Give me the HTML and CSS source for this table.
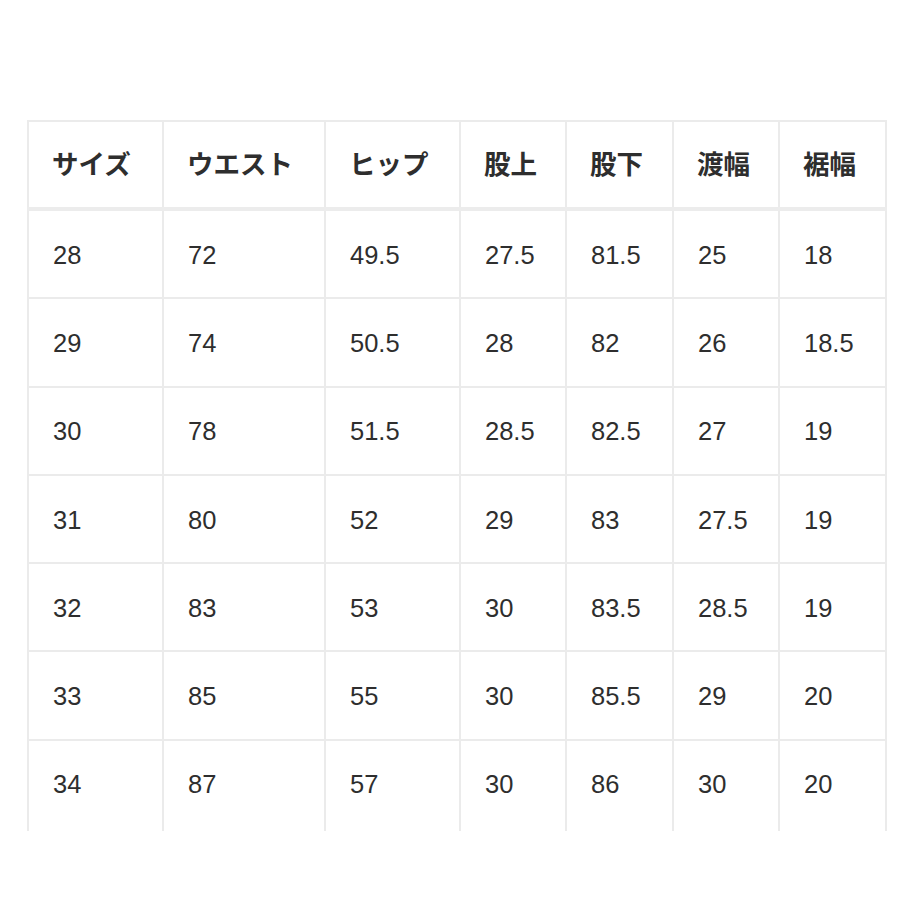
FILE: index.html
```html
<!DOCTYPE html>
<html lang="ja">
<head>
<meta charset="utf-8">
<title>サイズ表</title>
<link rel="stylesheet" href="styles.css">
</head>
<body>
<div class="page">
  <div class="clip">
    <table class="size-table">
      <colgroup>
        <col class="c1"><col class="c2"><col class="c3"><col class="c4"><col class="c5"><col class="c6"><col class="c7">
      </colgroup>
      <thead>
        <tr><th>サイズ</th><th>ウエスト</th><th>ヒップ</th><th>股上</th><th>股下</th><th>渡幅</th><th>裾幅</th></tr>
      </thead>
      <tbody>
        <tr><td>28</td><td>72</td><td>49.5</td><td>27.5</td><td>81.5</td><td>25</td><td>18</td></tr>
        <tr><td>29</td><td>74</td><td>50.5</td><td>28</td><td>82</td><td>26</td><td>18.5</td></tr>
        <tr><td>30</td><td>78</td><td>51.5</td><td>28.5</td><td>82.5</td><td>27</td><td>19</td></tr>
        <tr><td>31</td><td>80</td><td>52</td><td>29</td><td>83</td><td>27.5</td><td>19</td></tr>
        <tr><td>32</td><td>83</td><td>53</td><td>30</td><td>83.5</td><td>28.5</td><td>19</td></tr>
        <tr><td>33</td><td>85</td><td>55</td><td>30</td><td>85.5</td><td>29</td><td>20</td></tr>
        <tr class="last"><td>34</td><td>87</td><td>57</td><td>30</td><td>86</td><td>30</td><td>20</td></tr>
      </tbody>
    </table>
  </div>
</div>
</body>
</html>
```
FILE: styles.css
```css
html, body {
  margin: 0;
  padding: 0;
  background: #ffffff;
}
.page {
  padding: 120px 0 0 27px;
}
.clip {
  width: 862px;
  height: 711px;
  overflow: hidden;
}
.size-table {
  border-collapse: collapse;
  table-layout: fixed;
  width: 860px;
  color: #2e2e2e;
  font-family: "Liberation Sans", "Noto Sans CJK JP", sans-serif;
}
.c1 { width: 135px; }
.c2 { width: 162px; }
.c3 { width: 135px; }
.c4 { width: 106px; }
.c5 { width: 107px; }
.c6 { width: 106px; }
.c7 { width: 107px; }
.size-table th,
.size-table td {
  border: 2px solid #ebebeb;
  text-align: left;
  padding: 0 0 0 24px;
  vertical-align: middle;
}
.size-table th {
  font-family: "Noto Sans CJK JP", sans-serif;
  font-weight: 700;
  font-size: 26.5px;
  height: 81px;
  border-bottom: 4px solid #ececec;
  padding-left: 23px;
  padding-bottom: 4px;
}
.size-table td {
  font-size: 25.5px;
  height: 84.3px;
  padding-top: 2px;
}
.size-table .last td {
  border-bottom: 0;
  padding-bottom: 12px;
}
```
